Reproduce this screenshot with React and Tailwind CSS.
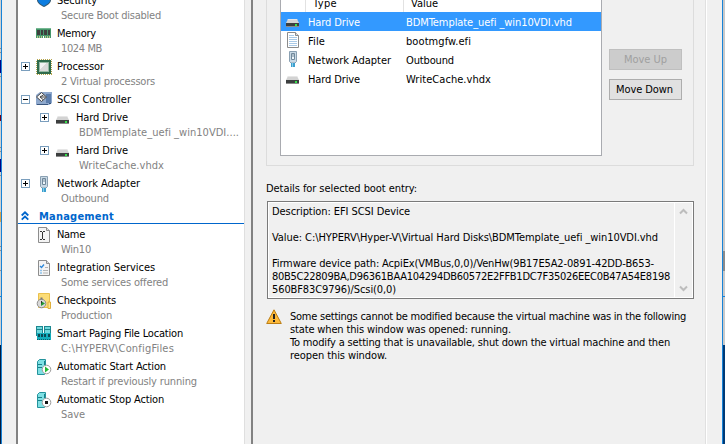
import { useLayoutEffect, useRef } from "react";

// Single line of text whose tracking is tuned so that it fills w pixels.
function T({ w, className = "", children }) {
  const ref = useRef(null);
  useLayoutEffect(() => {
    const el = ref.current;
    el.style.letterSpacing = "0px";
    const range = document.createRange();
    range.selectNodeContents(el);
    const n = el.textContent.length;
    el.style.letterSpacing = (w - range.getBoundingClientRect().width) / n + "px";
  }, [w]);
  return (
    <span ref={ref} className={"inline-block whitespace-pre " + className}>
      {children}
    </span>
  );
}

function Expander({ open }) {
  return (
    <svg width="9" height="9" viewBox="0 0 9 9" shapeRendering="crispEdges">
      <path d="M.5 .5h8v8h-8z" fill="#fff" stroke="#7a9ebd" />
      <path d="M2 4.500h5" stroke="#000" />
      {!open && <path d="M4.500 2v5" stroke="#000" />}
    </svg>
  );
}

function DriveIcon() {
  return (
    <svg width="16" height="16" viewBox="0 0 16 16">
      <path d="M3 6h9l2 4H1z" fill="#d3d3d3" />
      <path d="M3 6h9l.5 1h-10z" fill="#e6e6e6" />
      <path d="M1 10h13v4H1z" fill="#3c3f3f" />
      <path d="M1 13h13v1H1z" fill="#8a8a8a" />
      <path d="M10 11h2v2h-2z" fill="#35e04a" />
    </svg>
  );
}

function NetIcon() {
  return (
    <svg width="16" height="16" viewBox="0 0 16 16">
      <path d="M4.500 .5h7v10l-1.500 1.500h-4l-1.500-1.500z" fill="#c9d9e5" stroke="#8aa0b2" />
      <path d="M6.500 2.500h3v6h-3z" fill="#eef6fb" stroke="#70889b" />
      <path d="M8 2v4" stroke="#70889b" />
      <path d="M6 12h4v4H6z" fill="#3d9fce" />
      <path d="M7 12h1v4H7z" fill="#86cdea" />
    </svg>
  );
}

function FileIcon() {
  return (
    <svg width="16" height="16" viewBox="0 0 16 16">
      <path d="M2.500 .5h8l3 3v12h-11z" fill="#fff" stroke="#8b8b8b" />
      <path d="M10.500 .5v3h3" fill="#ddd" stroke="#8b8b8b" />
      <path d="M4 3.500h5M4 5.500h8M4 7.500h8M4 9.500h8M4 11.500h8M4 13.500h8" stroke="#a9c9e6" />
    </svg>
  );
}

function ShieldIcon() {
  return (
    <svg width="16" height="16" viewBox="0 0 16 16">
      <path d="M8 0l7 2v5c0 3.500-4 5.500-7 7-3-1.500-7-3.500-7-7V2z" fill="#33586f" />
      <path d="M8 1l6 2v4c0 3-3.500 4.500-6 6-2.500-1.500-6-3-6-6V3z" fill="#0d7de0" />
    </svg>
  );
}

function MemoryIcon() {
  return (
    <svg width="16" height="16" viewBox="0 0 16 16" shapeRendering="crispEdges">
      <path d="M0 2h15v10H0z" fill="#45966a" />
      <path d="M0 2h15v1H0z" fill="#76b892" />
      <path d="M1 4h3v5H1zM5 4h2v5H5zM8 4h3v5H8zM12 4h2v5h-2z" fill="#3c3f3d" />
      <path d="M1 11h13" stroke="#b9c58b" strokeWidth="2" strokeDasharray="1 1" />
      <path d="M7 10h1v2H7z" fill="#fff" />
    </svg>
  );
}

function CpuIcon() {
  return (
    <svg width="16" height="16" viewBox="0 0 16 16" shapeRendering="crispEdges">
      <path d="M.5 .5h15v15H.5z" fill="none" stroke="#b5a44a" strokeDasharray="1 1" />
      <path d="M1 1h14v14H1z" fill="#2f6b4c" />
      <path d="M3 3h10v10H3z" fill="#96b9a4" />
      <path d="M4 4h8v8H4z" fill="#dadada" />
      <path d="M4 4h6L4 10z" fill="#f3f3f3" />
    </svg>
  );
}

function ScsiIcon() {
  return (
    <svg width="16" height="16" viewBox="0 0 16 16">
      <path d="M0 3l4-3h12v11l-3 2H0z" fill="#8ea8cc" />
      <path d="M10 2h5v9h-5z" fill="#5c7dab" />
      <path d="M1 12h11v1H1zM13 11h2v1h-2z" fill="#39567f" />
      <path d="M5.500 .5l5 4.500-5 4.500-5-4.500z" fill="#f3f3f3" stroke="#444" />
      <path d="M7.500 3L4 5h5.500M4 5l3 2.500" fill="none" stroke="#444" />
    </svg>
  );
}

function NameIcon() {
  return (
    <svg width="16" height="16" viewBox="0 0 16 16">
      <path d="M2.500 .5h8l3 3v12h-11z" fill="#f4f4f4" stroke="#8d8d8d" />
      <path d="M10.500 .5v3h3" fill="#ddd" stroke="#8d8d8d" />
      <path d="M4 4.500h2M7 4.500h2M4 12.500h2M7 12.500h2M6.500 5v7" stroke="#333" />
    </svg>
  );
}

function ServicesIcon() {
  return (
    <svg width="16" height="16" viewBox="0 0 16 16">
      <path d="M2.500 .5h8l3 3v12h-11z" fill="#f4f4f4" stroke="#8d8d8d" />
      <path d="M10.500 .5v3h3" fill="#ddd" stroke="#8d8d8d" />
      <path d="M4 6l1.500 1.500L8 4.500" fill="none" stroke="#2b86d9" strokeWidth="1.300" />
      <path d="M4 10.500h2M4 13h2" stroke="#8fc3ec" strokeWidth="1.500" />
      <path d="M9 7.500h3M7 10.500h5M7 13h5" stroke="#b4b4b4" />
    </svg>
  );
}

function CheckpointIcon() {
  return (
    <svg width="16" height="16" viewBox="0 0 16 16">
      <path d="M2.500 0.500h11v14h-11z" fill="#fbdc77" stroke="#eac04c" />
      <path d="M12 9h2.500v6.500H12z" fill="#ffe48a" stroke="#e0b03c" />
      <circle cx="5.500" cy="10.500" r="4.300" fill="#dadada" stroke="#8c8c8c" />
      <path d="M4.500 4.500h2v2h-2z" fill="#777" />
      <path d="M5 8l4 2.500-4 2.500z" fill="#1f9a32" />
      <path d="M5.500 8v2.500" stroke="#333" />
    </svg>
  );
}

function PagingIcon() {
  return (
    <svg width="16" height="16" viewBox="0 0 16 16" shapeRendering="crispEdges">
      <path d="M.5 .5h6v9h-6zM8.500 .5h6v9h-6z" fill="#6fd8dc" stroke="#1d8790" />
      <path d="M1 3.500h5M9 3.500h5" stroke="#1d8790" />
      <path d="M1 7h14v7H1z" fill="#13aebc" />
      <path d="M2 8h2v3H2zM5 8h2v3H5zM8 8h2v3H8zM12 8h2v3h-2z" fill="#0b4a55" />
      <path d="M1 13.500h14" stroke="#0b5d69" strokeDasharray="1 1" />
    </svg>
  );
}

function ServerIcon({ stop }) {
  return (
    <svg width="16" height="16" viewBox="0 0 16 16">
      <path d="M1.500 2.500l2-2h6v13l-1 2h-7z" fill="#7fe0e4" stroke="#24939c" />
      <path d="M2 5.500h4M2 8.500h4M8.500 2v4" stroke="#178089" />
      <circle cx="10.500" cy="10.500" r="4.300" fill="#fff" stroke="#9a9a9a" />
      {stop ? <path d="M9 9h3v3H9z" fill="#111" /> : <path d="M9 7.500l4 3-4 3z" fill="#22b832" />}
    </svg>
  );
}

function WarnIcon() {
  return (
    <svg width="16" height="16" viewBox="0 0 16 16">
      <path d="M8 .8l7.300 13.700H.7z" fill="#fdb93a" stroke="#bb7d14" strokeLinejoin="round" />
      <path d="M7 5h2v5H7zM7 11h2v2H7z" fill="#222" />
    </svg>
  );
}

function TreeRow({ icon, title, tw, sub, sw, exp, nested }) {
  return (
    <div className={"flex shrink-0 " + (sub ? "h-[33px] " : "h-[18px] ") + (nested ? "pl-[22px]" : "pl-[3px]")}>
      <div className="w-[15px] shrink-0 pt-[3px]">{exp && <Expander open={exp === "open"} />}</div>
      <div className="w-[21px] shrink-0">{icon}</div>
      <div className="flex flex-col items-start">
        <T w={tw} className="h-[15px]">{title}</T>
        {sub && <T w={sw} className={"h-[15px] text-[#828282] " + (nested ? "ml-[3px]" : "ml-1")}>{sub}</T>}
      </div>
    </div>
  );
}

function BootRow({ icon, type, tw, value, vw, selected }) {
  return (
    <div className={"flex h-[19px] items-start " + (selected ? "bg-[#3399ff] text-white" : "")}>
      <div className="w-[27px] shrink-0 pt-px pl-[4px]">{icon}</div>
      <div className="flex w-[98px] shrink-0 pt-[3px]"><T w={tw}>{type}</T></div>
      <T w={vw} className="mt-[3px]">{value}</T>
    </div>
  );
}

function Chevron({ down }) {
  return (
    <svg width="9" height="7" viewBox="0 0 9 7">
      <path d={down ? "M1 1.500l3.500 3.500L8 1.500" : "M1 5.500L4.500 2 8 5.500"} fill="none" stroke="#bdbdbd" strokeWidth="2" />
    </svg>
  );
}

export default function App() {
  return (
    <div className="flex h-[444px] w-[725px] overflow-hidden bg-[#f0f0f0] font-['DejaVu_Sans_Condensed','DejaVu_Sans',sans-serif] text-[11px] leading-[15px] text-black [font-stretch:condensed]">
      <div className="flex w-px shrink-0 flex-col bg-[#d0d0d0]">
        <div className="mt-[48px] h-px bg-[#8e8e8e]" />
        <div className="mt-[3px] h-px bg-[#8e8e8e]" />
        <div className="mt-[7px] h-[13px] bg-[#000080]" />
        <div className="mt-[3px] h-px bg-[#8e8e8e]" />
        <div className="mt-[38px] h-[6px] bg-[#6e0018]" />
        <div className="mt-[26px] h-px bg-[#8e8e8e]" />
        <div className="mt-[3px] h-px bg-[#8e8e8e]" />
        <div className="mt-[7px] h-[13px] bg-[#000080]" />
        <div className="mt-[3px] h-px bg-[#8e8e8e]" />
        <div className="mt-[36px] h-[10px] bg-[#d8a24a]" />
        <div className="mt-[24px] h-px bg-[#8e8e8e]" />
        <div className="mt-[3px] h-px bg-[#8e8e8e]" />
        <div className="mt-[19px] h-px bg-[#8e8e8e]" />
        <div className="mt-[25px] h-px bg-[#1883d7]" />
        <div className="mt-[48px] grow bg-[#031b3d]" />
      </div>
      <div className="w-px shrink-0 bg-[#1883d7]" />
      <div className="w-[14px] shrink-0" />

      <div className="flex w-[237px] shrink-0 border-r-2 border-l-2 border-[#828282]">
        <div className="flex w-[226px] shrink-0 flex-col overflow-hidden bg-white">
          <div className="-mt-[7px] flex flex-col">
            <TreeRow icon={<ShieldIcon />} title="Security" tw={40} sub="Secure Boot disabled" sw={100} />
            <TreeRow icon={<MemoryIcon />} title="Memory" tw={39} sub="1024 MB" sw={41} />
            <TreeRow exp="closed" icon={<CpuIcon />} title="Processor" tw={47} sub="2 Virtual processors" sw={94} />
            <TreeRow exp="open" icon={<ScsiIcon />} title="SCSI Controller" tw={74} />
            <TreeRow nested exp="closed" icon={<DriveIcon />} title="Hard Drive" tw={52} sub="BDMTemplate_uefi _win10VDI...." sw={160} />
            <TreeRow nested exp="closed" icon={<DriveIcon />} title="Hard Drive" tw={52} sub="WriteCache.vhdx" sw={85} />
            <TreeRow exp="closed" icon={<NetIcon />} title="Network Adapter" tw={83} sub="Outbound" sw={48} />
            <div className="mb-[3px] flex h-[15px] border-b border-b-[#0066cc] pl-[3px] text-[#0066cc]">
              <svg width="8" height="10" viewBox="0 0 8 10" className="mt-[2px]">
                <path d="M.7 4.500L4 1.300l3.300 3.200M.7 8.700L4 5.500l3.300 3.200" fill="none" stroke="#0066cc" strokeWidth="1.800" />
              </svg>
              <T w={75} className="ml-[10px] font-bold leading-[15px]">Management</T>
            </div>
            <TreeRow icon={<NameIcon />} title="Name" tw={28} sub="Win10" sw={30} />
            <TreeRow icon={<ServicesIcon />} title="Integration Services" tw={98} sub="Some services offered" sw={107} />
            <TreeRow icon={<CheckpointIcon />} title="Checkpoints" tw={59} sub="Production" sw={51} />
            <TreeRow icon={<PagingIcon />} title="Smart Paging File Location" tw={126} sub="C:\HYPERV\ConfigFiles" sw={113} />
            <TreeRow icon={<ServerIcon />} title="Automatic Start Action" tw={109} sub="Restart if previously running" sw={136} />
            <TreeRow icon={<ServerIcon stop />} title="Automatic Stop Action" tw={107} sub="Save" sw={24} />
          </div>
        </div>
        <div className="grow border-l border-[#dfdfdf] bg-[#f0f0f0]" />
      </div>

      <div className="flex w-[452px] shrink-0 flex-col pl-[13px]">
        <div className="flex h-[166px] w-[428px] shrink-0 border-r border-b border-l border-[#dcdcdc] pl-[13px]">
          <div className="h-[156px] w-[322px] border-r border-b border-l border-[#a9abb0] bg-white">
            <div className="flex h-[12px]">
              <div className="w-[25px] border-r border-[#e2e2e2]" />
              <div className="flex w-[98px] items-start border-r border-[#e2e2e2] pl-[7px]"><T w={24} className="-mt-[4px]">Type</T></div>
              <div className="flex items-start pl-[7px]"><T w={27} className="-mt-[4px]">Value</T></div>
            </div>
            <BootRow selected icon={<DriveIcon />} type="Hard Drive" tw={52} value="BDMTemplate_uefi _win10VDI.vhd" vw={166} />
            <BootRow icon={<FileIcon />} type="File" tw={17} value="bootmgfw.efi" vw={65} />
            <BootRow icon={<NetIcon />} type="Network Adapter" tw={83} value="Outbound" vw={48} />
            <BootRow icon={<DriveIcon />} type="Hard Drive" tw={52} value="WriteCache.vhdx" vw={85} />
          </div>
          <div className="mt-[49px] ml-[7px] flex flex-col gap-[9px]">
            <button className="flex h-[21px] w-[73px] items-center justify-center border border-[#bfbfbf] bg-[#cccccc] text-[#a0a0a0]"><T w={43}>Move Up</T></button>
            <button className="flex h-[21px] w-[73px] items-center justify-center border border-[#adadad] bg-[#e1e1e1] pr-[2px]"><T w={57}>Move Down</T></button>
          </div>
        </div>
        <T w={151} className="mt-[15px] h-[15px] self-start">Details for selected boot entry:</T>
        <div className="mt-[5px] ml-px flex h-[98px] w-[427px] shrink-0 border border-[#7a7a7a]">
          <div className="flex grow justify-between border border-white">
            <div className="flex flex-col items-start pt-[2px] pl-[3px] leading-[13px]">
              <T w={138}>Description: EFI SCSI Device</T>
              <T w={386} className="mt-[13px]">{"Value: C:\\HYPERV\\Hyper-V\\Virtual Hard Disks\\BDMTemplate_uefi _win10VDI.vhd"}</T>
              <T w={382} className="mt-[13px]">Firmware device path: AcpiEx(VMBus,0,0)/VenHw(9B17E5A2-0891-42DD-B653-</T>
              <T w={398}>80B5C22809BA,D96361BAA104294DB60572E2FFB1DC7F35026EEC0B47A54E8198</T>
              <T w={124}>560BF83C9796)/Scsi(0,0)</T>
            </div>
            <div className="flex w-[18px] flex-col items-center justify-between border-l border-white py-[5px]">
              <Chevron />
              <Chevron down />
            </div>
          </div>
        </div>
        <div className="mt-[10px] flex">
          <div className="w-[24px] shrink-0"><WarnIcon /></div>
          <div className="flex flex-col items-start leading-[13px]">
            <T w={396} className="mt-px">Some settings cannot be modified because the virtual machine was in the following</T>
            <T w={221}>state when this window was opened: running.</T>
            <T w={380}>To modify a setting that is unavailable, shut down the virtual machine and then</T>
            <T w={97}>reopen this window.</T>
          </div>
        </div>
      </div>

      <div className="w-px shrink-0 bg-[#e0e0e0]" />
      <div className="w-px shrink-0 bg-white" />
      <div className="grow" />
      <div className="w-px shrink-0 bg-[#1883d7]" />
      <div className="flex w-[2px] shrink-0 flex-col bg-[#c9c9c9]">
        <div className="mt-[251px] h-[20px] bg-[#8b8b8b]" />
        <div className="mt-[25px] h-px bg-[#1883d7]" />
        <div className="mt-[48px] h-[99px] bg-[#003a75]" />
      </div>
    </div>
  );
}
